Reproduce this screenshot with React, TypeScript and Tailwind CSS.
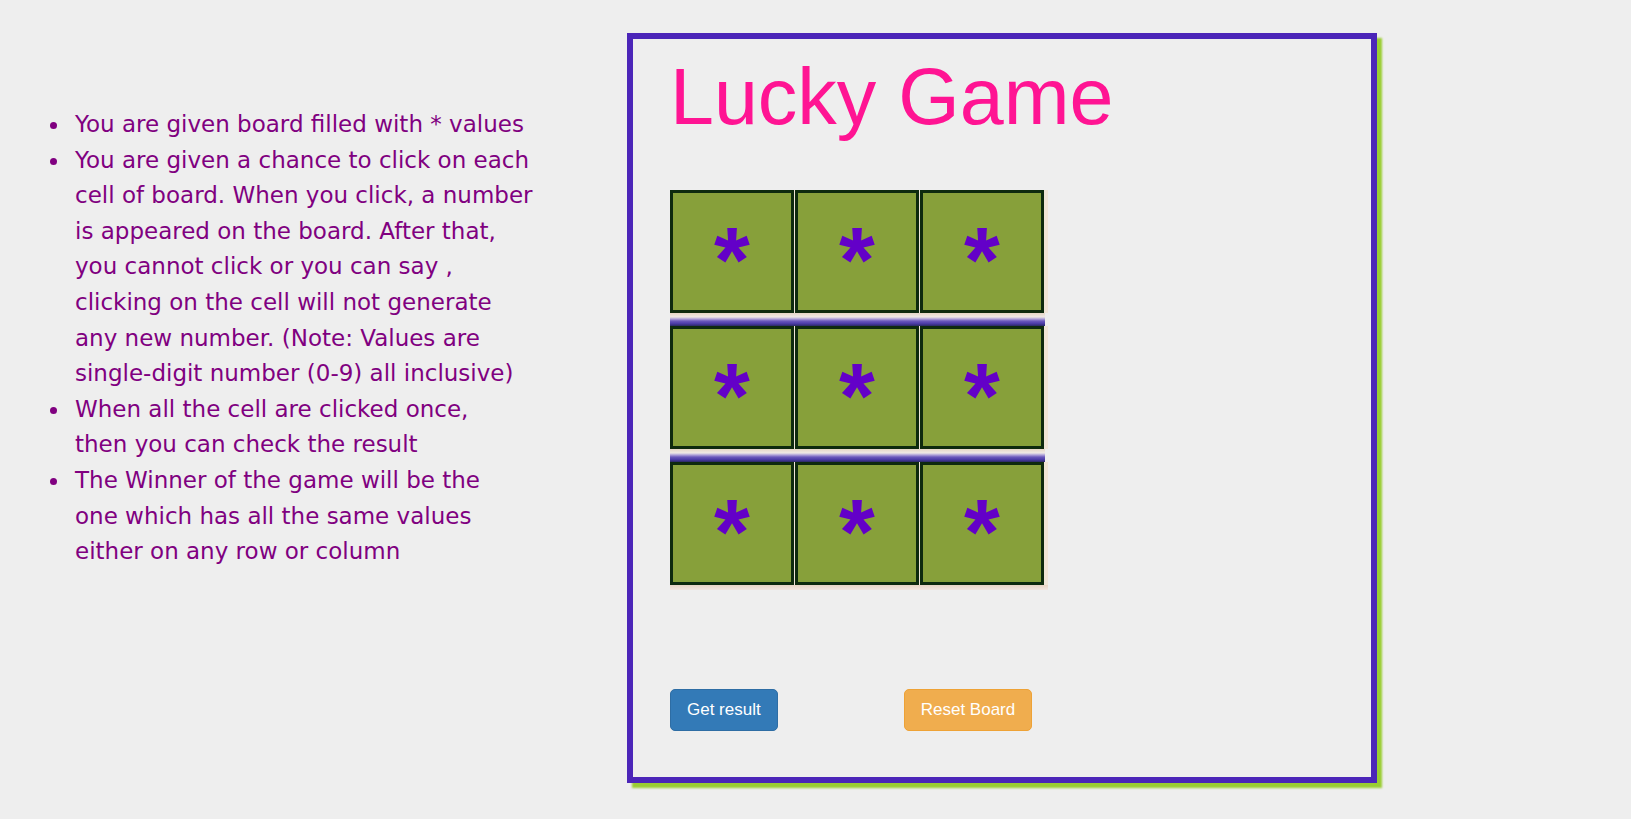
import React, { useState } from 'react'

const rules = [
  ['You are given board filled with * values'],
  [
    'You are given a chance to click on each',
    'cell of board. When you click, a number',
    'is appeared on the board. After that,',
    'you cannot click or you can say ,',
    'clicking on the cell will not generate',
    'any new number. (Note: Values are',
    'single-digit number (0-9) all inclusive)',
  ],
  ['When all the cell are clicked once,', 'then you can check the result'],
  ['The Winner of the game will be the', 'one which has all the same values', 'either on any row or column'],
]

const emptyBoard = () => Array.from({ length: 3 }, () => ['*', '*', '*'])

export default function App() {
  const [board, setBoard] = useState<string[][]>(emptyBoard())

  const clickCell = (r: number, c: number) => {
    if (board[r][c] !== '*') return
    const next = board.map((row) => [...row])
    next[r][c] = String(Math.floor(Math.random() * 10))
    setBoard(next)
  }

  return (
    <div className="min-h-screen bg-[#eeeeee] flex" style={{ fontFamily: '"Liberation Sans", Arial, sans-serif' }}>
      {/* Rules */}
      <div className="w-[627px] shrink-0 pt-[107px]">
        <ul
          className="pl-[50px] text-[#800080] text-[23px] leading-[35.6px]"
          style={{ fontFamily: '"DejaVu Sans", sans-serif' }}
        >
          {rules.map((lines, i) => (
            <li key={i} className="flex">
              <span className="w-[7px] h-[7px] mt-[15px] mr-[18px] rounded-full bg-[#800080] shrink-0" />
              <span className="whitespace-nowrap">
                {lines.map((l, j) => (
                  <React.Fragment key={j}>
                    {l}
                    {j < lines.length - 1 && <br />}
                  </React.Fragment>
                ))}
              </span>
            </li>
          ))}
        </ul>
      </div>

      {/* Game panel */}
      <div className="mt-[33px] w-[750px] h-[750px] border-[6px] border-[#4b25b8] shadow-[5px_5px_2px_#9acd32] px-[37px] flex flex-col">
        <h1 className="mt-[12px] text-[79px] leading-[92px] text-[#ff1493]">Lucky Game</h1>

        <div className="mt-[47px] w-[378px] flex flex-col">
          {board.map((row, r) => (
            <div key={r} className="flex flex-col">
              <div className="flex gap-[1px] pr-[3px] bg-[#efe4d6]">
                {row.map((val, c) => (
                  <button
                    key={c}
                    onClick={() => clickCell(r, c)}
                    className="w-[124px] h-[123px] bg-[#87a03a] border-[3px] border-[#0e2a0e] flex justify-center items-start pt-[22px] text-[92px] leading-[90px] font-bold text-[#6300c8]"
                  >
                    {val}
                  </button>
                ))}
              </div>
              {r < 2 ? (
                <div className="mr-[3px] h-[13px] bg-[linear-gradient(to_bottom,#e6d6c6_0%,#efe9e5_30%,#b3a6da_45%,#6a58bc_62%,#4a3aa6_82%,#2a2a60_100%)]" />
              ) : (
                <div className="h-[5px] bg-[linear-gradient(to_bottom,#e8d4c4,#f2e6e0)]" />
              )}
            </div>
          ))}
        </div>

        <div className="mt-[99px] flex">
          <button className="h-[42px] px-[16px] border border-[#2e6da4] bg-[#337ab7] text-white text-[17px] leading-[24px] rounded-[5px]">
            Get result
          </button>
          <button
            onClick={() => setBoard(emptyBoard())}
            className="ml-[126px] h-[42px] px-[16px] border border-[#eea236] bg-[#f0ad4e] text-white text-[17px] leading-[24px] rounded-[5px]"
          >
            Reset Board
          </button>
        </div>
      </div>
    </div>
  )
}
